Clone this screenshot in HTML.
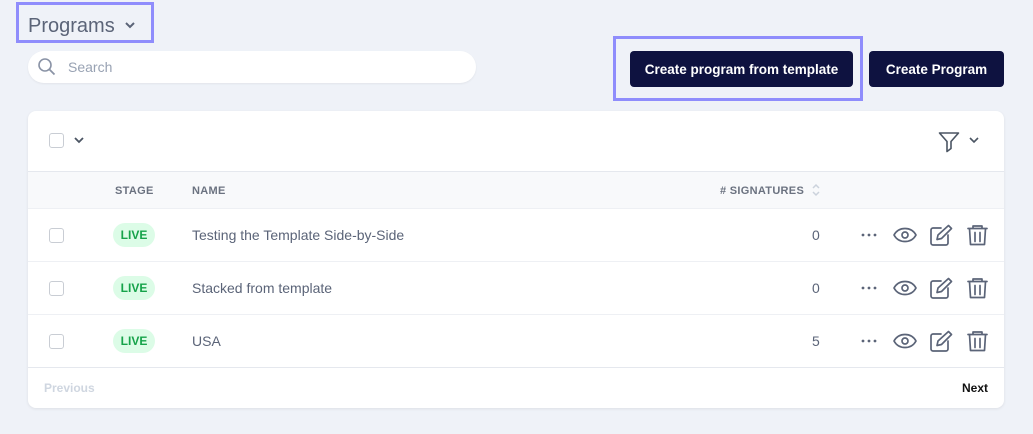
<!DOCTYPE html>
<html><head><style>
*{box-sizing:border-box;margin:0;padding:0}
body{width:1033px;height:434px;background:#eff2f8;font-family:"Liberation Sans",sans-serif;position:relative;overflow:hidden}
.abs{position:absolute}
.hl{border:3px solid #8f8dfc}
.btn{background:#0e1240;color:#fff;font-weight:bold;font-size:13.5px;border-radius:4px;display:flex;align-items:center;justify-content:center}
.card{left:28px;top:111px;width:976px;height:297px;background:#fff;border-radius:8px;box-shadow:0 1px 3px rgba(0,0,0,.08);overflow:hidden}
.cb{width:15px;height:15px;border:1.3px solid #c9cdd4;border-radius:3px;background:#fff}
.th{font-size:11px;font-weight:bold;color:#6b7280;letter-spacing:.3px}
.row{left:0;width:976px;height:53px;border-top:1px solid #eef0f4}
.live{background:#dcfce7;color:#16a34a;font-weight:bold;font-size:12px;border-radius:12px;width:42px;height:24px;display:flex;align-items:center;justify-content:center}
.nm{font-size:14px;color:#5b6478}
</style></head><body>
<div class="abs hl" style="left:16px;top:2px;width:138px;height:41px"></div>
<div class="abs" style="left:28px;top:15px;font-size:20px;color:#5b6478">Programs</div>
<svg class="abs" style="left:124px;top:20px" width="12" height="10" viewBox="0 0 12 10"><path d="M2 3l4 4 4-4" fill="none" stroke="#5b6478" stroke-width="2"/></svg>
<div class="abs" style="left:28px;top:51px;width:448px;height:32px;background:#fff;border-radius:16px;box-shadow:0 1px 2px rgba(0,0,0,.06)"></div>
<svg class="abs" style="left:37px;top:57px" width="20" height="20" viewBox="0 0 20 20"><circle cx="8" cy="8" r="6" fill="none" stroke="#8a93a6" stroke-width="1.6"/><path d="M12.5 12.5l5 5" stroke="#8a93a6" stroke-width="1.8"/></svg>
<div class="abs" style="left:68px;top:59px;font-size:14px;color:#98a2b3">Search</div>
<div class="abs hl" style="left:613px;top:36px;width:250px;height:65px"></div>
<div class="abs btn" style="left:630px;top:51px;width:223px;height:36px">Create program from template</div>
<div class="abs btn" style="left:869px;top:51px;width:135px;height:36px">Create Program</div>
<div class="abs card">
 <div class="abs cb" style="left:21px;top:22px"></div>
 <svg class="abs" style="left:45px;top:25px" width="12" height="9" viewBox="0 0 12 9"><path d="M2 2l4 4 4-4" fill="none" stroke="#4b5563" stroke-width="1.8"/></svg>
 <svg class="abs" style="left:909px;top:19px" width="24" height="24" viewBox="0 0 24 24"><path d="M2.5 3h19l-7.5 8.5v7l-4 3v-10z" fill="none" stroke="#4b5563" stroke-width="1.6" stroke-linejoin="round"/></svg>
 <svg class="abs" style="left:940px;top:25px" width="12" height="9" viewBox="0 0 12 9"><path d="M2 2l4 4 4-4" fill="none" stroke="#4b5563" stroke-width="1.6"/></svg>
 <div class="abs" style="left:0;top:60px;width:976px;height:37px;background:#f8f9fb;border-top:1px solid #e5e8ee"></div>
 <div class="abs th" style="left:87px;top:74px">STAGE</div>
 <div class="abs th" style="left:164px;top:74px">NAME</div>
 <div class="abs th" style="left:692px;top:74px"># SIGNATURES</div>
 <svg class="abs" style="left:783px;top:71px" width="10" height="16" viewBox="0 0 10 16"><path d="M2 6l3-3 3 3M2 10l3 3 3-3" fill="none" stroke="#cbd2dc" stroke-width="1.5"/></svg>
 <div class="abs row" style="top:97px">
  <div class="abs cb" style="left:21px;top:19px"></div>
  <div class="abs live" style="left:85px;top:14px">LIVE</div>
  <div class="abs nm" style="left:164px;top:18px">Testing the Template Side-by-Side</div>
  <div class="abs nm" style="left:784px;top:18px">0</div>
 </div>
 <div class="abs row" style="top:150px">
  <div class="abs cb" style="left:21px;top:19px"></div>
  <div class="abs live" style="left:85px;top:14px">LIVE</div>
  <div class="abs nm" style="left:164px;top:18px">Stacked from template</div>
  <div class="abs nm" style="left:784px;top:18px">0</div>
 </div>
 <div class="abs row" style="top:203px">
  <div class="abs cb" style="left:21px;top:19px"></div>
  <div class="abs live" style="left:85px;top:14px">LIVE</div>
  <div class="abs nm" style="left:164px;top:18px">USA</div>
  <div class="abs nm" style="left:784px;top:18px">5</div>
 </div>
 <div class="abs" style="left:0;top:256px;width:976px;border-top:1px solid #e5e8ee"></div>
 <div class="abs" style="left:16px;top:270px;font-size:12px;font-weight:bold;color:#cfd6e0">Previous</div>
 <div class="abs" style="left:934px;top:270px;font-size:12px;font-weight:bold;color:#111">Next</div>
</div>
<svg width="0" height="0" style="position:absolute"><defs>
<g id="acts" fill="none" stroke="#5b6478" stroke-width="1.7" stroke-linecap="round" stroke-linejoin="round">
 <circle cx="4" cy="12" r="1.4" fill="#5b6478" stroke="none"/><circle cx="10" cy="12" r="1.4" fill="#5b6478" stroke="none"/><circle cx="16" cy="12" r="1.4" fill="#5b6478" stroke="none"/>
 <path d="M35 12c2.5-4.5 6-6.5 11-6.5s8.5 2 11 6.5c-2.5 4.5-6 6.5-11 6.5s-8.5-2-11-6.5z"/><circle cx="46" cy="12" r="3"/>
 <path d="M82 5h-8a2 2 0 0 0-2 2v13a2 2 0 0 0 2 2h13a2 2 0 0 0 2-2v-8"/><path d="M89.5 2.5l3 3-10 10-4.5 1 1-4.5z"/>
 <path d="M109 5.5h19M114 5.5v-2.5h9v2.5M110.5 5.5l1 16h14l1-16M116 9.5v9M121 9.5v9"/>
</g></defs></svg>
<svg class="abs" style="left:859px;top:223px" width="132" height="26" viewBox="0 0 132 26"><use href="#acts"/></svg>
<svg class="abs" style="left:859px;top:276px" width="132" height="26" viewBox="0 0 132 26"><use href="#acts"/></svg>
<svg class="abs" style="left:859px;top:329px" width="132" height="26" viewBox="0 0 132 26"><use href="#acts"/></svg>
</body></html>
